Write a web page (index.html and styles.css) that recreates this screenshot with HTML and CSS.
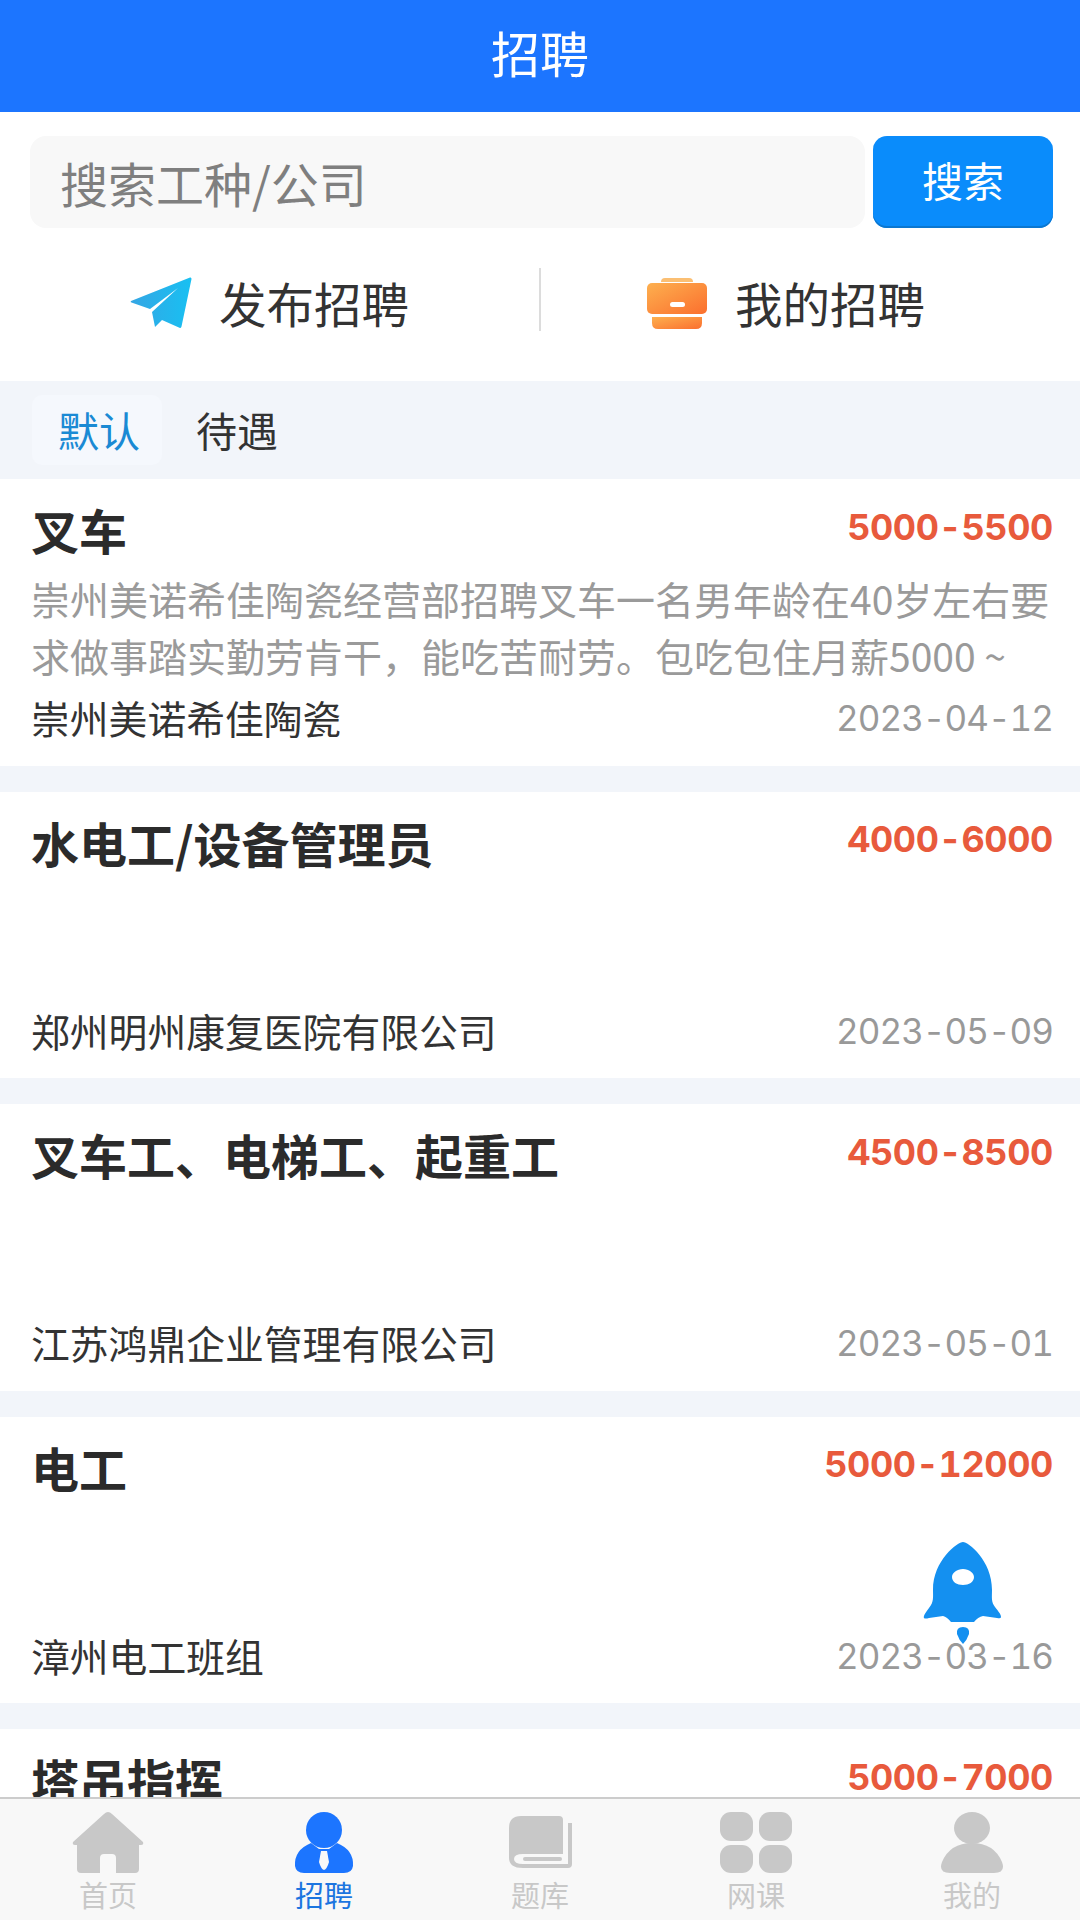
FILE: index.html
```html
<!DOCTYPE html>
<html lang="zh-CN">
<head>
<meta charset="utf-8">
<title>招聘</title>
<link rel="stylesheet" href="styles.css">
</head>
<body>
<div class="app">
  <header class="topbar">招聘</header>
  <section class="search">
    <div class="search-input">搜索工种/公司</div>
    <button class="search-btn">搜索</button>
  </section>
  <section class="actions">
    <div class="action">
      <svg class="action-icon" viewBox="0 0 62 52"><defs><linearGradient id="pl" x1="0" y1="0" x2="1" y2="0"><stop offset="0" stop-color="#35a6e4"/><stop offset="1" stop-color="#18c0f2"/></linearGradient></defs><path fill="url(#pl)" d="M60 0.5 L1 24 Q0 25 1.5 25.500 L20 32 L48 11 L22 35 L25 50 L32 43 L50 51 Q51 51 51.500 49.500 L61.500 2 Q61.500 0 60 0.5Z"/></svg>
      <span>发布招聘</span>
    </div>
    <div class="action-divider"></div>
    <div class="action action-mine">
      <svg class="action-icon" viewBox="0 0 62 52"><defs><linearGradient id="br" x1="0" y1="0" x2="1" y2="1"><stop offset="0" stop-color="#fdb04f"/><stop offset="1" stop-color="#fb6f2e"/></linearGradient></defs><path fill="#fbbf73" d="M15 5 Q15 1 19 1 H43 Q47 1 47 5Z"/><rect fill="url(#br)" x="1" y="6" width="60" height="31" rx="5"/><path fill="url(#br)" d="M6 40 H56 V46 Q56 52 50 52 H12 Q6 52 6 46Z"/><rect fill="#fff" x="24" y="25" width="15" height="5" rx="2.500"/></svg>
      <span>我的招聘</span>
    </div>
  </section>
  <nav class="sortbar">
    <div class="sort sort-on">默认</div>
    <div class="sort">待遇</div>
  </nav>
  <main class="list">
    <article class="card">
      <div class="row head"><h2>叉车</h2><b>5000-5500</b></div>
      <p class="desc">崇州美诺希佳陶瓷经营部招聘叉车一名男年龄在40岁左右要求做事踏实勤劳肯干，能吃苦耐劳。包吃包住月薪5000 ~</p>
      <div class="row foot"><span>崇州美诺希佳陶瓷</span><time>2023-04-12</time></div>
    </article>
    <article class="card">
      <div class="row head"><h2>水电工/设备管理员</h2><b>4000-6000</b></div>
      <p class="desc"></p>
      <div class="row foot"><span>郑州明州康复医院有限公司</span><time>2023-05-09</time></div>
    </article>
    <article class="card">
      <div class="row head"><h2>叉车工、电梯工、起重工</h2><b>4500-8500</b></div>
      <p class="desc"></p>
      <div class="row foot"><span>江苏鸿鼎企业管理有限公司</span><time>2023-05-01</time></div>
    </article>
    <article class="card">
      <div class="row head"><h2>电工</h2><b>5000-12000</b></div>
      <p class="desc"></p>
      <div class="row foot"><span>漳州电工班组</span><time>2023-03-16</time></div>
    </article>
    <article class="card">
      <div class="row head"><h2>塔吊指挥</h2><b>5000-7000</b></div>
      <p class="desc"></p>
    </article>
  </main>
  <footer class="tabbar">
    <div class="tab">
      <svg class="tab-icon" viewBox="0 0 72 61"><path d="M36 0 Q34 0 32 2 L1 30 Q0 33 3 33 H5 V57 Q5 61 9 61 H28 V46 Q28 42 32 42 H40 Q44 42 44 46 V61 H63 Q67 61 67 57 V33 H69 Q72 33 71 30 L40 2 Q38 0 36 0Z"/></svg>
      <span>首页</span>
    </div>
    <div class="tab tab-on">
      <svg class="tab-icon" viewBox="0 0 60 61"><circle cx="30" cy="18" r="18"/><path d="M17 31 L25 37 H35 L43 31 Q60 38 59 54 Q58 61 50 61 H10 Q2 61 1 54 Q0 38 17 31Z"/><path fill="#f8f8f8" d="M27 39 H33 L35 50 Q33 57 30 58 Q27 57 25 50Z"/></svg>
      <span>招聘</span>
    </div>
    <div class="tab">
      <svg class="tab-icon" viewBox="0 0 63 61"><path d="M12 4 H50 Q54 4 54 8 V42 H14 Q5 42 5 47 Q5 52 14 52 H59 V11 H63 V52 Q63 56 59 56 H14 Q0 56 0 46 V16 Q0 4 12 4Z"/><rect x="14" y="45" width="39" height="4" rx="2"/></svg>
      <span>题库</span>
    </div>
    <div class="tab">
      <svg class="tab-icon" viewBox="0 0 72 61"><rect x="0" y="0" width="33" height="29" rx="11"/><rect x="39" y="0" width="33" height="29" rx="11"/><rect x="0" y="33" width="33" height="28" rx="11"/><rect x="39" y="33" width="33" height="28" rx="11"/></svg>
      <span>网课</span>
    </div>
    <div class="tab">
      <svg class="tab-icon" viewBox="0 0 64 61"><ellipse cx="32" cy="16" rx="18" ry="16"/><path d="M32 31 Q54 31 62 50 Q66 61 54 61 H10 Q-2 61 2 50 Q10 31 32 31Z"/></svg>
      <span>我的</span>
    </div>
  </footer>
  <svg class="rocket" viewBox="0 0 80 102"><path fill="#1490f0" fill-rule="evenodd" d="M40 0 C35 0 10 18 10 48 C10 55 11 60 6 66 C3 70 0 74 1 76 Q2 77 6 76 L20 74 Q24 75 28 80 H51 Q55 75 60 74 L74 76 Q78 77 78 75 C78 72 75 69 72 65 C68 60 69 55 69 48 C69 18 45 0 40 0Z M40 27 C46 27 51 31 51 35 C51 40 46 43 40 43 C34 43 29 40 29 35 C29 31 34 27 40 27Z"/><path fill="#1490f0" d="M40 85 Q47 85 46 92 Q44 98 40 102 Q36 98 34 92 Q33 85 40 85Z"/></svg>
</div>
</body>
</html>
```
FILE: styles.css
```css
* { box-sizing: border-box; }
html, body { margin: 0; padding: 0; }
body { font-family: "Noto Sans CJK SC", "Noto Sans", sans-serif; color: #333; background: #fff; }
.app { position: relative; width: 1080px; height: 1920px; display: flex; flex-direction: column; overflow: hidden; }
.topbar { flex: none; height: 112px; background: #1c75ff; color: #fff; font-size: 49px; display: flex; align-items: center; justify-content: center; padding-bottom: 10px; }
.search { flex: none; display: flex; justify-content: space-between; padding: 24px 27px 0 30px; }
.search-input { width: 835px; height: 92px; background: #f8f8f8; border-radius: 16px; color: #7f7f7f; font-size: 48px; line-height: 92px; padding-left: 30px; }
.search-btn { width: 180px; height: 92px; border: 0; border-radius: 14px; background: #0a8cfb; box-shadow: inset 0 -2px 0 #0b77d0; color: #fff; font-family: inherit; font-size: 41px; padding: 0 0 6px; }
.actions { flex: none; height: 153px; display: flex; align-items: center; padding-bottom: 4px; }
.action { flex: none; width: 539px; display: flex; align-items: center; justify-content: center; gap: 27px; font-size: 47.500px; color: #333; }
.action-mine { padding-right: 50px; }
.action-icon { width: 62px; height: 52px; display: block; }
.action-divider { flex: none; width: 2px; height: 63px; margin-bottom: 6px; background: #dcdcdc; }
.sortbar { flex: none; height: 98px; background: #f2f5fa; display: flex; align-items: center; gap: 34px; padding-left: 32px; font-size: 41px; color: #333; }
.sort { height: 70px; line-height: 68px; }
.sort-on { background: #f5f8fd; color: #1a8ad4; border-radius: 10px; padding: 0 22px 0 26px; }
.list { flex: 1; min-height: 0; overflow: hidden; background: #f2f5fa; }
.card { background: #fff; height: 286.5px; margin-bottom: 26px; padding: 20px 27px 0 31px; }
.row { display: flex; justify-content: space-between; align-items: center; }
.head { height: 60px; }
.head h2 { margin: 0; font-size: 48px; font-weight: 700; color: #2b2b2b; }
.head b { font-family: Inter, "Noto Sans", sans-serif; font-variant-numeric: tabular-nums; font-size: 36px; letter-spacing: -0.4px; font-weight: 700; color: #e85a3c; margin-top: -5px; }
.desc { margin: 0; height: 114px; margin-top: 11px; font-size: 39px; line-height: 57px; color: #9a9a9a; overflow: hidden; }
.foot { height: 60px; margin-top: 3px; font-size: 38.8px; color: #333; }
.foot time { font-family: Inter, "Noto Sans", sans-serif; font-variant-numeric: tabular-nums; color: #999; font-size: 35px; letter-spacing: -1px; margin-top: 2px; }
.tabbar { flex: none; height: 123px; background: #f8f8f8; border-top: 2px solid #ccc; display: flex; }
.tab { flex: 1; display: flex; flex-direction: column; align-items: center; padding-top: 13px; font-size: 29px; color: #c8c8c8; line-height: 38px; }
.tab-icon { height: 61px; display: block; fill: #c8c8c8; margin-bottom: 2px; }
.tab-on { color: #1c75e0; }
.tab-on .tab-icon { fill: #1c75ff; }
.rocket { position: absolute; left: 923px; top: 1542px; width: 80px; height: 102px; }
```
